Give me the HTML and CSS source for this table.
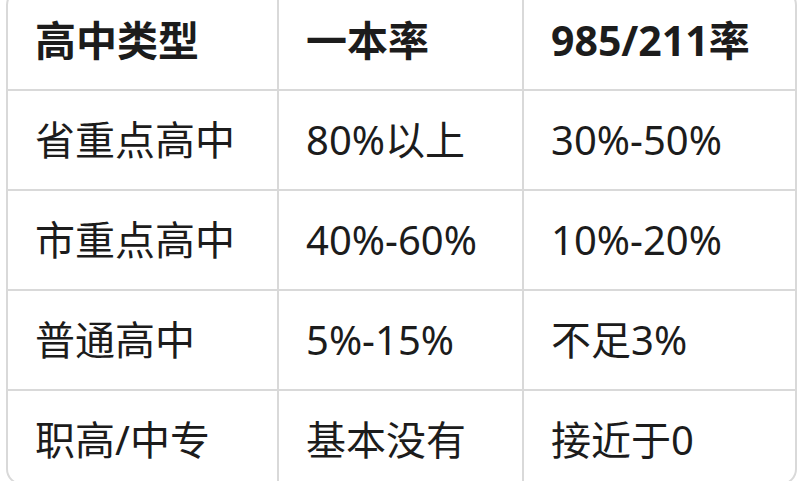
FILE: index.html
```html
<!DOCTYPE html>
<html lang="zh-CN">
<head>
<meta charset="utf-8">
<link rel="stylesheet" href="styles.css">
</head>
<body>
<div class="wrap">
  <table class="tbl">
    <thead>
      <tr><th>高中类型</th><th>一本率</th><th>985/211率</th></tr>
    </thead>
    <tbody>
      <tr><td>省重点高中</td><td>80%以上</td><td>30%-50%</td></tr>
      <tr><td>市重点高中</td><td>40%-60%</td><td>10%-20%</td></tr>
      <tr><td>普通高中</td><td>5%-15%</td><td>不足3%</td></tr>
      <tr class="last"><td>职高/中专</td><td>基本没有</td><td>接近于0</td></tr>
    </tbody>
  </table>
</div>
</body>
</html>
```
FILE: styles.css
```css
html, body {
  margin: 0;
  padding: 0;
  background: #ffffff;
  overflow: hidden;
}
body {
  font-family: "Noto Sans", "Noto Sans CJK SC", sans-serif;
  color: #1c1c1c;
}
.wrap {
  margin: -11px 6px 0 6px;
  border: 2px solid #d9d9d9;
  border-radius: 16px;
  overflow: hidden;
}
.tbl {
  width: 100%;
  border-collapse: separate;
  border-spacing: 0;
  table-layout: fixed;
}
.tbl th, .tbl td {
  font-size: 40px;
  line-height: 58px;
  padding: 20px 29px 20px 27px;
  text-align: left;
  white-space: nowrap;
  border-right: 2px solid #d9d9d9;
  border-bottom: 2px solid #d9d9d9;
}
.tbl th {
  font-weight: 700;
  font-size: 41px;
}
.tbl td {
  font-weight: 400;
}
.tbl th:nth-child(1), .tbl td:nth-child(1) { width: 213px; }
.tbl th:nth-child(2), .tbl td:nth-child(2) { width: 187px; }
.tbl th:last-child, .tbl td:last-child { border-right: none; }
.tbl tr.last td { border-bottom: none; padding-bottom: 14px; }
```
